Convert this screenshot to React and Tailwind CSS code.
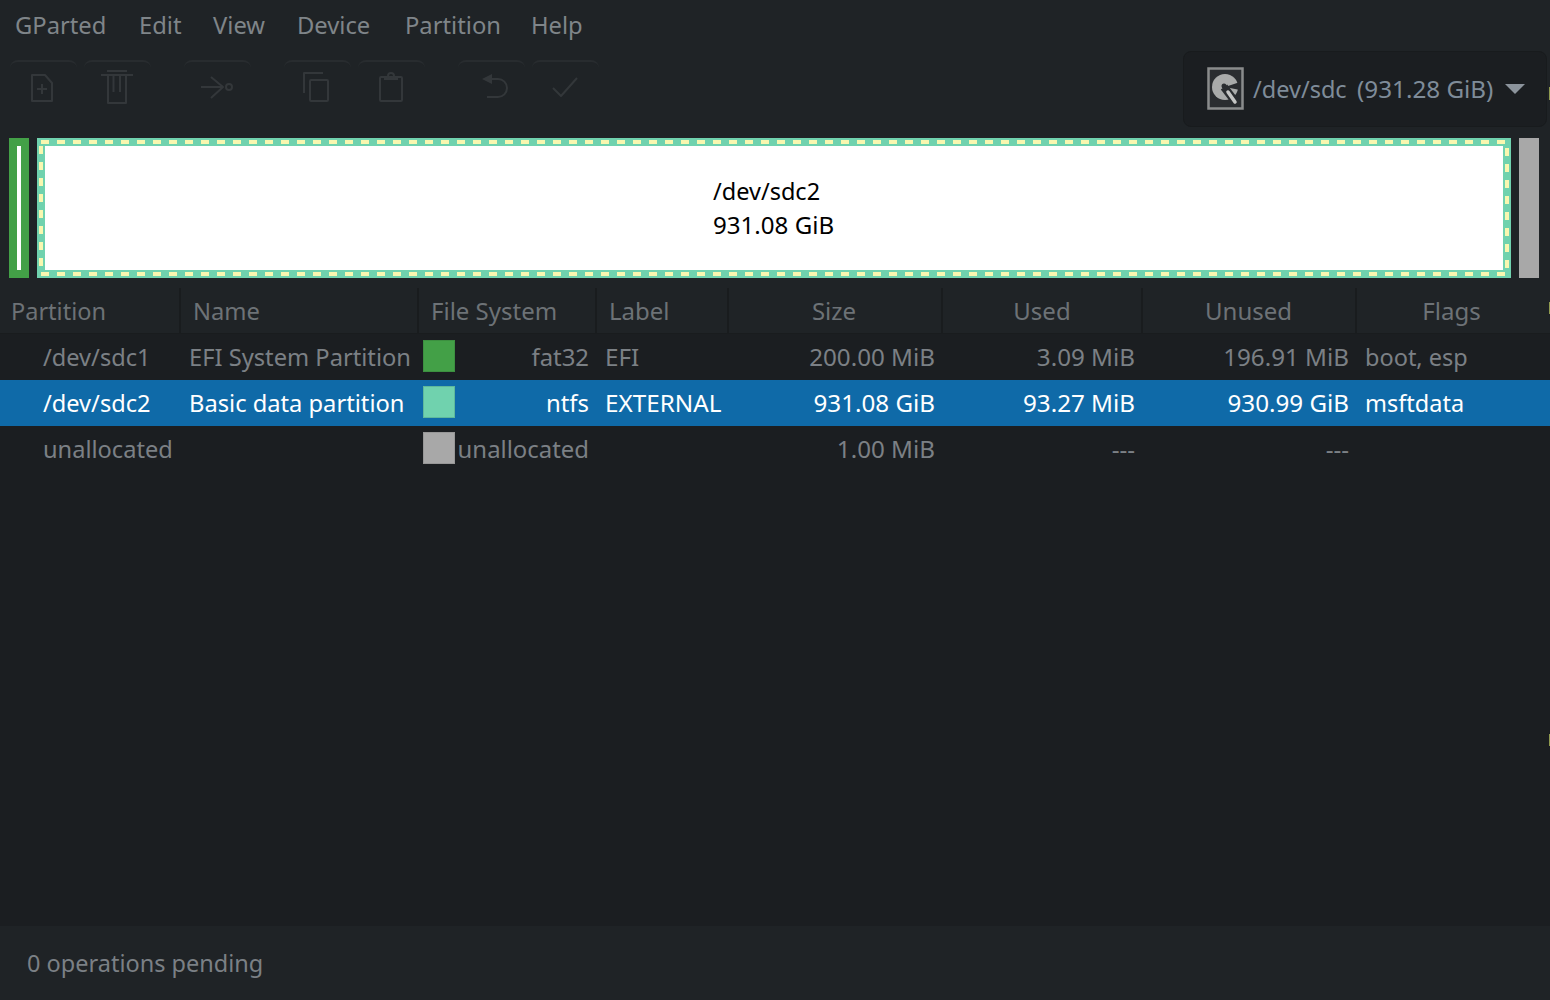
import React from 'react';

const menus = [
    ['GParted', 'w-[124px]'],
    ['Edit', 'w-[74px]'],
    ['View', 'w-[84px]'],
    ['Device', 'w-[108px]'],
    ['Partition', 'w-[126px]'],
    ['Help', 'w-[80px]'],
];

// toolbar icons are all drawn on the full 67x56 button
const ToolIcon = ({ children }) => (
    <svg width="67" height="56" viewBox="0 0 67 56" fill="none" stroke="currentColor" strokeWidth="2" strokeLinejoin="round">
        {children}
    </svg>
);

const tools = [
    {
        cls: 'ml-[10px]',
        icon: (
            <>
                <path d="M22 15h13l7 8v18H22z" />
                <path d="M32 24v10M27 29h10" />
            </>
        ),
    },
    {
        cls: 'ml-[7px]',
        icon: (
            <>
                <path d="M23 11h20M17 15h32" />
                <path d="M24 16v27h18V16" />
                <path d="M29.500 16v16M36 16v16" />
            </>
        ),
    },
    {
        cls: 'ml-[33px]',
        icon: (
            <>
                <path d="M17 27h22M27 17l12 10-12 11" />
                <circle cx="45" cy="27" r="3" />
            </>
        ),
    },
    {
        cls: 'ml-[33px]',
        icon: (
            <>
                <path d="M39 13H20v20" />
                <rect x="26" y="20" width="18" height="21" rx="1" />
            </>
        ),
    },
    {
        cls: 'ml-[7px]',
        icon: (
            <>
                <rect x="22" y="17" width="22" height="24" rx="1" />
                <circle cx="33" cy="16" r="3" />
                <path d="M26 19h14" />
            </>
        ),
    },
    {
        cls: 'ml-[33px]',
        icon: (
            <>
                <path d="M24 19l10-5v10z" fill="currentColor" stroke="none" />
                <path d="M33 19h7a9 9 0 0 1 0 18H29" />
            </>
        ),
    },
    {
        cls: 'ml-[7px]',
        icon: <path d="M21 28l8 8L45 18" />,
    },
];

const DiskIcon = () => (
    <svg className="mb-[2px] blur-[0.5px]" width="37" height="43" viewBox="0 0 37 43">
        <rect x="1.500" y="1.500" width="34" height="40" fill="#2a2d30" stroke="#8a8c8c" strokeWidth="2.500" />
        <circle cx="18" cy="20" r="13" fill="#a9abaa" />
        <circle cx="17" cy="19" r="2.500" fill="#2a2d30" />
        <path d="M18 20l15-5v8z" fill="#2a2d30" />
        <path d="M17 20l13 17" stroke="#2a2d30" strokeWidth="8" />
        <path d="M21 25l7 10" stroke="#c4c5c4" strokeWidth="3.500" strokeLinecap="round" />
    </svg>
);

const columns = [
    { label: 'Partition', cls: 'w-[181px] pl-[11px] text-left text-[23.5px]' },
    { label: 'Name', cls: 'w-[238px] pl-[12px] text-left text-[23.75px]' },
    { label: 'File System', cls: 'w-[178px] pl-[12px] text-left text-[24px]' },
    { label: 'Label', cls: 'w-[132px] pl-[12px] text-left text-[24px]' },
    { label: 'Size', cls: 'w-[214px] text-center text-[24px] pr-[2px]' },
    { label: 'Used', cls: 'w-[200px] text-center text-[24px]' },
    { label: 'Unused', cls: 'w-[214px] text-center text-[24px] pr-[1px]' },
    { label: 'Flags', cls: 'flex-1 text-center pr-[4px] text-[24px]' },
];

const rows = [
    { part: '/dev/sdc1', name: 'EFI System Partition', swatch: 'bg-[#43a047] border-[#3c9040]', fs: 'fat32', label: 'EFI', size: '200.00 MiB', used: '3.09 MiB', unused: '196.91 MiB', flags: 'boot, esp' },
    { part: '/dev/sdc2', name: 'Basic data partition', swatch: 'bg-[#70d2ae] border-[#5fb89c]', fs: 'ntfs', label: 'EXTERNAL', size: '931.08 GiB', used: '93.27 MiB', unused: '930.99 GiB', flags: 'msftdata', selected: true },
    { part: 'unallocated', name: '', swatch: 'bg-[#a8a8a8] border-[#979797]', fs: 'unallocated', label: '', size: '1.00 MiB', used: '---', unused: '---', flags: '' },
];

export default function App() {
    return (
        <div className="relative w-[1550px] h-[1000px] overflow-hidden flex flex-col bg-[#1f2326] text-[23.5px] text-[#7b8085] font-['Noto_Sans',sans-serif]">
            {/* menu bar */}
            <div className="h-[50px] flex items-center pl-[15px] pt-[2px] text-[#7f8589] text-[23.75px]">
                {menus.map(([m, w]) => (
                    <span key={m} className={w}>{m}</span>
                ))}
            </div>

            {/* toolbar */}
            <div className="h-[88px] flex text-[#33373a]">
                <div className="flex pt-[10px] items-start">
                    {tools.map((t, i) => (
                        <div key={i} className={`w-[67px] h-[56px] rounded-t-lg border-t-2 border-[#282c2f] ${t.cls}`}>
                            <div className="-mt-[2px]">
                                <ToolIcon>{t.icon}</ToolIcon>
                            </div>
                        </div>
                    ))}
                </div>
                <div className="ml-auto mr-[3px] mt-px w-[364px] h-[76px] flex items-center pl-[23px] rounded-lg bg-[#1b1e21] border border-[#181b1d] text-[#7f8c99]">
                    <DiskIcon />
                    <span className="ml-[9px] w-[104px] mt-[2px]">/dev/sdc</span>
                    <span className="w-[148px] text-[24.25px]">(931.28 GiB)</span>
                    <span className="w-0 h-0 border-x-[10px] border-x-transparent border-t-[10px] border-t-[#8c949c]" />
                </div>
            </div>

            {/* partition bar */}
            <div className="h-[140px] flex pl-[9px] pr-[11px]">
                <div className="w-[20px] p-[8px] bg-[#43a047]">
                    <div className="h-full bg-white" />
                </div>
                <div className="relative ml-[8px] w-[1474px] p-[8px] bg-[#70d2ae]">
                    <div className="h-full bg-white flex flex-col items-center justify-center text-black leading-[34px]">
                        <div className="w-[122px]">/dev/sdc2</div>
                        <div className="w-[122px] text-[24.1px] whitespace-nowrap">931.08 GiB</div>
                    </div>
                    <svg className="absolute inset-0" width="1474" height="140" fill="none" stroke="#f9f7b0" strokeWidth="4" strokeDasharray="8 8">
                        <path d="M4 4H1474" />
                        <path d="M4 136H1474" />
                        <path d="M4 8V134" />
                        <path d="M1470 8V134" strokeDashoffset="-2" />
                    </svg>
                </div>
                <div className="ml-[8px] w-[20px] bg-[#a8a8a8]" />
            </div>

            {/* table */}
            <div className="mt-[10px] h-[46px] flex items-center border-b border-[#191c1e]">
                {columns.map((c) => (
                    <div key={c.label} className={`h-full leading-[46px] border-r-2 border-[#191c1e] last:border-r-0 text-[#6d7276] ${c.cls}`}>
                        {c.label}
                    </div>
                ))}
            </div>
            <div className="flex-1 bg-[#1b1e21]">
                {rows.map((r) => (
                    <div key={r.part} className={`h-[46px] flex items-center ${r.selected ? 'bg-[#0f6aa8] text-white' : ''}`}>
                        <div className="w-[189px] pl-[43px] mt-[2px] text-[23.6px]">{r.part}</div>
                        <div className="w-[234px] whitespace-nowrap mt-[2px] text-[23.7px]">{r.name}</div>
                        <div className={`w-[32px] h-[32px] mb-[2px] border ${r.swatch}`} />
                        <div className="w-[134px] text-right text-[23.9px]">{r.fs}</div>
                        <div className="w-[130px] ml-[16px] text-[24.25px]">{r.label}</div>
                        <div className="w-[200px] text-right text-[24.2px]">{r.size}</div>
                        <div className="w-[200px] text-right text-[24.2px]">{r.used}</div>
                        <div className="w-[214px] text-right text-[24.2px]">{r.unused}</div>
                        <div className="ml-[16px] mt-[2px]">{r.flags}</div>
                    </div>
                ))}
            </div>

            {/* status bar */}
            <div className="h-[74px] flex items-center pl-[27px] pt-[2px]">0 operations pending</div>

            {/* resize ticks at the window edge */}
            <div className="absolute right-0 top-[87px] w-px h-[13px] bg-[#8f9a4e]" />
            <div className="absolute right-0 top-[302px] w-px h-[12px] bg-[#8f9a4e]" />
            <div className="absolute right-0 top-[734px] w-px h-[12px] bg-[#8f9a4e]" />
        </div>
    );
}
